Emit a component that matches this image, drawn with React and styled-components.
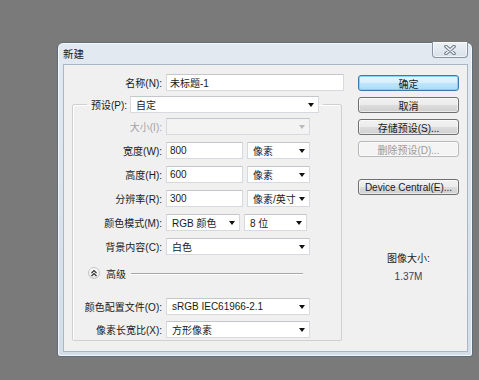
import React from 'react'
import styled, { createGlobalStyle } from 'styled-components'

const Global = createGlobalStyle`
  html, body {
    margin: 0;
    padding: 0;
  }
  body {
    background: #7a7a7a;
    font-family: "Liberation Sans", "Noto Sans CJK SC", sans-serif;
    font-size: 10px;
    color: #1a1a1a;
  }
`

const Desktop = styled.div`
  min-height: 100vh;
  box-sizing: border-box;
  padding: 42px 0 0 57px;
`

const Window = styled.div`
  width: 416px;
  height: 315px;
  box-sizing: border-box;
  border: 1px solid #5f6c79;
  border-radius: 6px 6px 3px 3px;
  background: linear-gradient(to bottom, #e2e9f1, #d4dee9);
  box-shadow: inset 0 0 0 1px rgba(255, 255, 255, 0.7);
  display: flex;
  flex-direction: column;
`

const TitleBar = styled.div`
  height: 21px;
  display: flex;
  align-items: flex-start;
  padding-left: 5px;
`

const Title = styled.div`
  padding-top: 5px;
  font-size: 10.5px;
  line-height: 12px;
  color: #1a1a1a;
`

const CloseButton = styled.div`
  margin: -1px 4px 0 auto;
  width: 36px;
  height: 16px;
  box-sizing: border-box;
  border: 1px solid #8794a3;
  border-top: none;
  border-radius: 0 0 4px 4px;
  background: linear-gradient(to bottom, #eef2f6, #d9e1ea);
  box-shadow: inset 0 0 0 1px rgba(255, 255, 255, 0.6);
  display: flex;
  align-items: center;
  justify-content: center;
`

const Client = styled.div`
  flex: 1;
  margin: 0 4px 4px 5px;
  border: 1px solid #a9b6c4;
  background: #f0f0f0;
  display: flex;
`

const FormColumn = styled.div`
  padding-top: 9px;
  width: 281px;
`

const NameRow = styled.div`
  display: grid;
  grid-template-columns: 98px 178px;
  column-gap: 4px;
  align-items: center;
  height: 17px;
`

const Label = styled.div`
  text-align: right;
  white-space: nowrap;
  color: ${p => (p.disabled ? '#a3a3a3' : '#1a1a1a')};
`

const Box = styled.div`
  width: ${p => p.w}px;
  height: 17px;
  box-sizing: border-box;
  border: 1px solid #d6d9dd;
  border-top-color: #c3c7cc;
  background: ${p => (p.disabled ? '#f3f3f3' : '#fff')};
  padding-left: ${p => (p.select ? 5 : 3)}px;
  display: flex;
  align-items: center;
  white-space: nowrap;
  overflow: hidden;
`

const Arrow = styled.span`
  margin-left: auto;
  margin-right: 4px;
  width: 0;
  height: 0;
  border-left: 3px solid transparent;
  border-right: 3px solid transparent;
  border-top: 4px solid ${p => (p.disabled ? '#b9b9b9' : '#111')};
`

const Group = styled.fieldset`
  margin: 5px 0 0 8px;
  padding: 0 0 2px 0;
  width: 270px;
  box-sizing: border-box;
  border: 1px solid #d0d0d0;
  border-radius: 2px;
  box-shadow: 1px 1px 0 #fff inset;
`

const Legend = styled.legend`
  margin-left: 14px;
  padding: 0 4px;
  display: flex;
  align-items: center;
  gap: 3px;
`

const FieldRow = styled.div`
  display: grid;
  grid-template-columns: 89px auto;
  column-gap: 4px;
  align-items: center;
  height: 17px;
  margin-top: ${p => p.gap}px;
`

const Fields = styled.div`
  display: flex;
  gap: 4px;
`

const AdvancedRow = styled.div`
  display: flex;
  align-items: center;
  height: 14px;
  margin-top: 11px;
  margin-bottom: 18px;
  padding-left: 15px;
`

const ToggleCircle = styled.div`
  width: 12px;
  height: 12px;
  box-sizing: border-box;
  border-radius: 50%;
  border: 1px solid #c4c4c4;
  background: linear-gradient(to bottom, #fdfdfd, #e6e6e6);
  display: flex;
  align-items: center;
  justify-content: center;
`

const AdvancedText = styled.span`
  margin-left: 6px;
`

const Rule = styled.div`
  flex: 1;
  margin: 0 38px 0 5px;
  height: 1px;
  background: #a8a8a8;
  box-shadow: 0 1px 0 #fff;
`

const SideColumn = styled.div`
  margin-left: auto;
  margin-right: 8px;
  width: 101px;
  padding-top: 10px;
  display: flex;
  flex-direction: column;
  gap: 6px;
`

const Button = styled.div`
  height: 16px;
  box-sizing: border-box;
  border-radius: 3px;
  display: flex;
  align-items: center;
  justify-content: center;
  white-space: nowrap;
  margin-top: ${p => (p.spaced ? 16 : 0)}px;
  border: 1px solid ${p => (p.primary ? '#3d7bad' : p.disabled ? '#b5b9bd' : '#707070')};
  color: ${p => (p.disabled ? '#9a9a9a' : '#1a1a1a')};
  background: ${p =>
    p.primary
      ? 'linear-gradient(to bottom, #e8f6fd 0%, #d4eefb 50%, #bfe6fb 51%, #a9dcf6 100%)'
      : p.disabled
        ? '#f4f4f4'
        : 'linear-gradient(to bottom, #f2f2f2 0%, #ebebeb 50%, #dddddd 51%, #cfcfcf 100%)'};
  box-shadow: inset 0 0 0 1px ${p => (p.primary ? 'rgba(120, 210, 245, 0.9)' : 'rgba(255, 255, 255, 0.55)')};
`

const SizeInfo = styled.div`
  margin-top: 49px;
  text-align: center;
  line-height: 18px;
`

const SizeValue = styled.div`
  color: #36405e;
`

const Select = ({ w, children, disabled }) => (
  <Box w={w} disabled={disabled} select>
    <span>{children}</span>
    <Arrow disabled={disabled} />
  </Box>
)

const CloseGlyph = () => (
  <svg width="12" height="10" viewBox="0 0 12 10">
    <path d="M2 1.5 L10 8.5 M10 1.5 L2 8.5" stroke="#6e7b89" strokeWidth="3.6" strokeLinecap="round" />
    <path d="M2 1.5 L10 8.5 M10 1.5 L2 8.5" stroke="#f4f6f9" strokeWidth="1.6" strokeLinecap="round" />
  </svg>
)

const ChevronsUp = () => (
  <svg width="8" height="8" viewBox="0 0 8 8">
    <path d="M1.5 4 L4 1.5 L6.5 4 M1.5 7 L4 4.5 L6.5 7" stroke="#333" strokeWidth="1.2" fill="none" />
  </svg>
)

export default function App () {
  return (
    <>
      <Global />
      <Desktop>
        <Window>
          <TitleBar>
            <Title>新建</Title>
            <CloseButton><CloseGlyph /></CloseButton>
          </TitleBar>
          <Client>
            <FormColumn>
              <NameRow>
                <Label>名称(N):</Label>
                <Box w={178}>未标题-1</Box>
              </NameRow>
              <Group>
                <Legend>
                  <Label>预设(P):</Label>
                  <Select w={189}>自定</Select>
                </Legend>
                <FieldRow gap={5}>
                  <Label disabled>大小(I):</Label>
                  <Select w={144} disabled />
                </FieldRow>
                <FieldRow gap={7}>
                  <Label>宽度(W):</Label>
                  <Fields>
                    <Box w={77}>800</Box>
                    <Select w={63}>像素</Select>
                  </Fields>
                </FieldRow>
                <FieldRow gap={7}>
                  <Label>高度(H):</Label>
                  <Fields>
                    <Box w={77}>600</Box>
                    <Select w={63}>像素</Select>
                  </Fields>
                </FieldRow>
                <FieldRow gap={7}>
                  <Label>分辨率(R):</Label>
                  <Fields>
                    <Box w={77}>300</Box>
                    <Select w={63}>像素/英寸</Select>
                  </Fields>
                </FieldRow>
                <FieldRow gap={7}>
                  <Label>颜色模式(M):</Label>
                  <Fields>
                    <Select w={74}>RGB 颜色</Select>
                    <Select w={63}>8 位</Select>
                  </Fields>
                </FieldRow>
                <FieldRow gap={7}>
                  <Label>背景内容(C):</Label>
                  <Select w={144}>白色</Select>
                </FieldRow>
                <AdvancedRow>
                  <ToggleCircle><ChevronsUp /></ToggleCircle>
                  <AdvancedText>高级</AdvancedText>
                  <Rule />
                </AdvancedRow>
                <FieldRow gap={0}>
                  <Label>颜色配置文件(O):</Label>
                  <Select w={144}>sRGB IEC61966-2.1</Select>
                </FieldRow>
                <FieldRow gap={6}>
                  <Label>像素长宽比(X):</Label>
                  <Select w={144}>方形像素</Select>
                </FieldRow>
              </Group>
            </FormColumn>
            <SideColumn>
              <Button primary>确定</Button>
              <Button>取消</Button>
              <Button>存储预设(S)...</Button>
              <Button disabled>删除预设(D)...</Button>
              <Button spaced>Device Central(E)...</Button>
              <SizeInfo>
                <div>图像大小:</div>
                <SizeValue>1.37M</SizeValue>
              </SizeInfo>
            </SideColumn>
          </Client>
        </Window>
      </Desktop>
    </>
  )
}
